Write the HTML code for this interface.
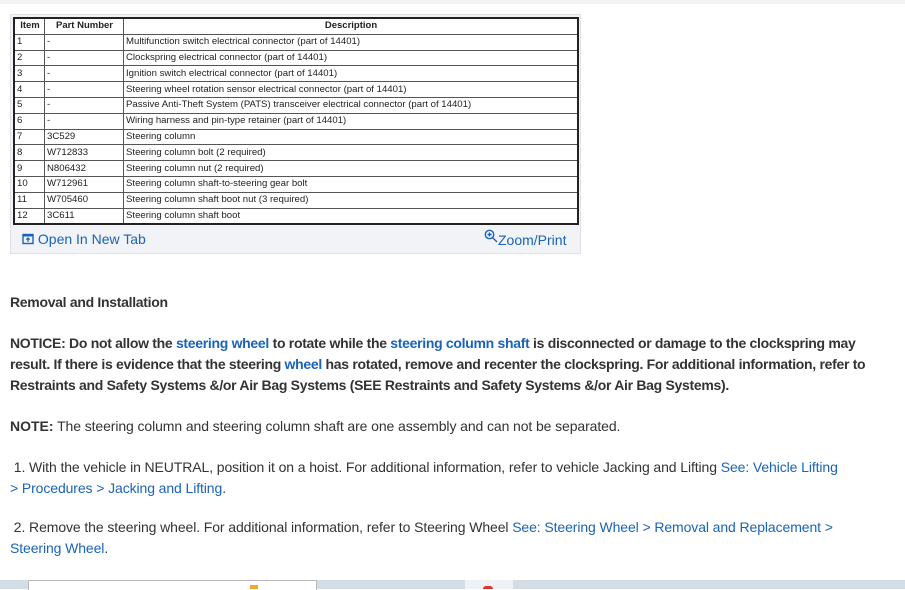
<!DOCTYPE html>
<html><head><style>
body{margin:0;width:905px;height:589px;overflow:hidden;background:#fff;font-family:"Liberation Sans",Arial,sans-serif;color:#333;position:relative}
.top{position:absolute;left:0;top:0;width:905px;height:4px;background:#f3f3f3}
.card{position:absolute;left:10px;top:14px;width:571px;height:240px;background:#f1f3f6;border:1px solid #dde1e6;box-sizing:border-box}
table{position:absolute;left:2px;top:2px;width:566px;border-collapse:collapse;background:#fff;border:2px solid #222;font-size:9.6px;color:#222}
td,th{border:1px solid #555;height:14.8px;padding:0 1px 0 2px;line-height:14px;white-space:nowrap}
th{font-weight:bold;text-align:center;font-size:9.5px}
.bar{position:absolute;left:10px;top:216px;font-size:14px;color:#1a63b8}
.p{position:absolute;left:10px;font-size:14px;line-height:21px;letter-spacing:-0.1px;width:890px;white-space:nowrap}
b{font-weight:bold;letter-spacing:-0.3px}
a{color:#1a63b8;text-decoration:none}
.bot{position:absolute;left:0;top:580px;width:905px;height:9px;background:#d3dde6}
</style></head><body>
<div class="top"></div>
<div class="card">
<table>
<tr><th style="width:26px">Item</th><th style="width:75px">Part Number</th><th>Description</th></tr>
<tr><td>1</td><td>-</td><td>Multifunction switch electrical connector (part of 14401)</td></tr>
<tr><td>2</td><td>-</td><td>Clockspring electrical connector (part of 14401)</td></tr>
<tr><td>3</td><td>-</td><td>Ignition switch electrical connector (part of 14401)</td></tr>
<tr><td>4</td><td>-</td><td>Steering wheel rotation sensor electrical connector (part of 14401)</td></tr>
<tr><td>5</td><td>-</td><td>Passive Anti-Theft System (PATS) transceiver electrical connector (part of 14401)</td></tr>
<tr><td>6</td><td>-</td><td>Wiring harness and pin-type retainer (part of 14401)</td></tr>
<tr><td>7</td><td>3C529</td><td>Steering column</td></tr>
<tr><td>8</td><td>W712833</td><td>Steering column bolt (2 required)</td></tr>
<tr><td>9</td><td>N806432</td><td>Steering column nut (2 required)</td></tr>
<tr><td>10</td><td>W712961</td><td>Steering column shaft-to-steering gear bolt</td></tr>
<tr><td>11</td><td>W705460</td><td>Steering column shaft boot nut (3 required)</td></tr>
<tr><td>12</td><td>3C611</td><td>Steering column shaft boot</td></tr>
</table>
<div class="bar" style="left:11px">
<svg width="12" height="12" viewBox="0 0 12 12" style="vertical-align:-1px"><rect x="1" y="1.5" width="10" height="9" fill="none" stroke="#1a63b8" stroke-width="1.4"/><rect x="1" y="1.5" width="10" height="2" fill="#1a63b8"/><path d="M6 9V5M4.3 6.6L6 5l1.7 1.6" stroke="#1a63b8" stroke-width="1.2" fill="none"/></svg> Open In New Tab</div>
<div class="bar" style="left:473px;top:214px"><svg width="14" height="14" viewBox="0 0 14 14" style="vertical-align:2px"><circle cx="5.5" cy="5.5" r="4.2" fill="none" stroke="#1a63b8" stroke-width="1.4"/><path d="M8.5 8.5L13 13M3.5 5.5h4M5.5 3.5v4" stroke="#1a63b8" stroke-width="1.4"/></svg>Zoom/Print</div>
</div>
<div class="p" style="top:292px"><b>Removal and Installation</b></div>
<div class="p" style="top:333px"><b>NOTICE: Do not allow the <a>steering wheel</a> to rotate while the <a>steering column shaft</a> is disconnected or damage to the clockspring may<br>result. If there is evidence that the steering <a>wheel</a> has rotated, remove and recenter the clockspring. For additional information, refer to<br>Restraints and Safety Systems &amp;/or Air Bag Systems (SEE Restraints and Safety Systems &amp;/or Air Bag Systems).</b></div>
<div class="p" style="top:416px"><b style="letter-spacing:0">NOTE:</b> The steering column and steering column shaft are one assembly and can not be separated.</div>
<div class="p" style="top:457px">&nbsp;1. With the vehicle in NEUTRAL, position it on a hoist. For additional information, refer to vehicle Jacking and Lifting <a>See: Vehicle Lifting<br>&gt; Procedures &gt; Jacking and Lifting</a>.</div>
<div class="p" style="top:517px">&nbsp;2. Remove the steering wheel. For additional information, refer to Steering Wheel <a>See: Steering Wheel &gt; Removal and Replacement &gt;<br>Steering Wheel</a>.</div>
<div class="bot"><div style="position:absolute;left:28px;top:0;width:287px;height:9px;background:#fff;border:1px solid #bbb;border-bottom:0"></div><div style="position:absolute;left:250px;top:5px;width:8px;height:4px;background:#f6a623"></div><div style="position:absolute;left:465px;top:0;width:48px;height:9px;background:#eef2f5"></div><div style="position:absolute;left:483px;top:6px;width:10px;height:3px;background:#d33;border-radius:5px 5px 0 0"></div></div>
</body></html>
